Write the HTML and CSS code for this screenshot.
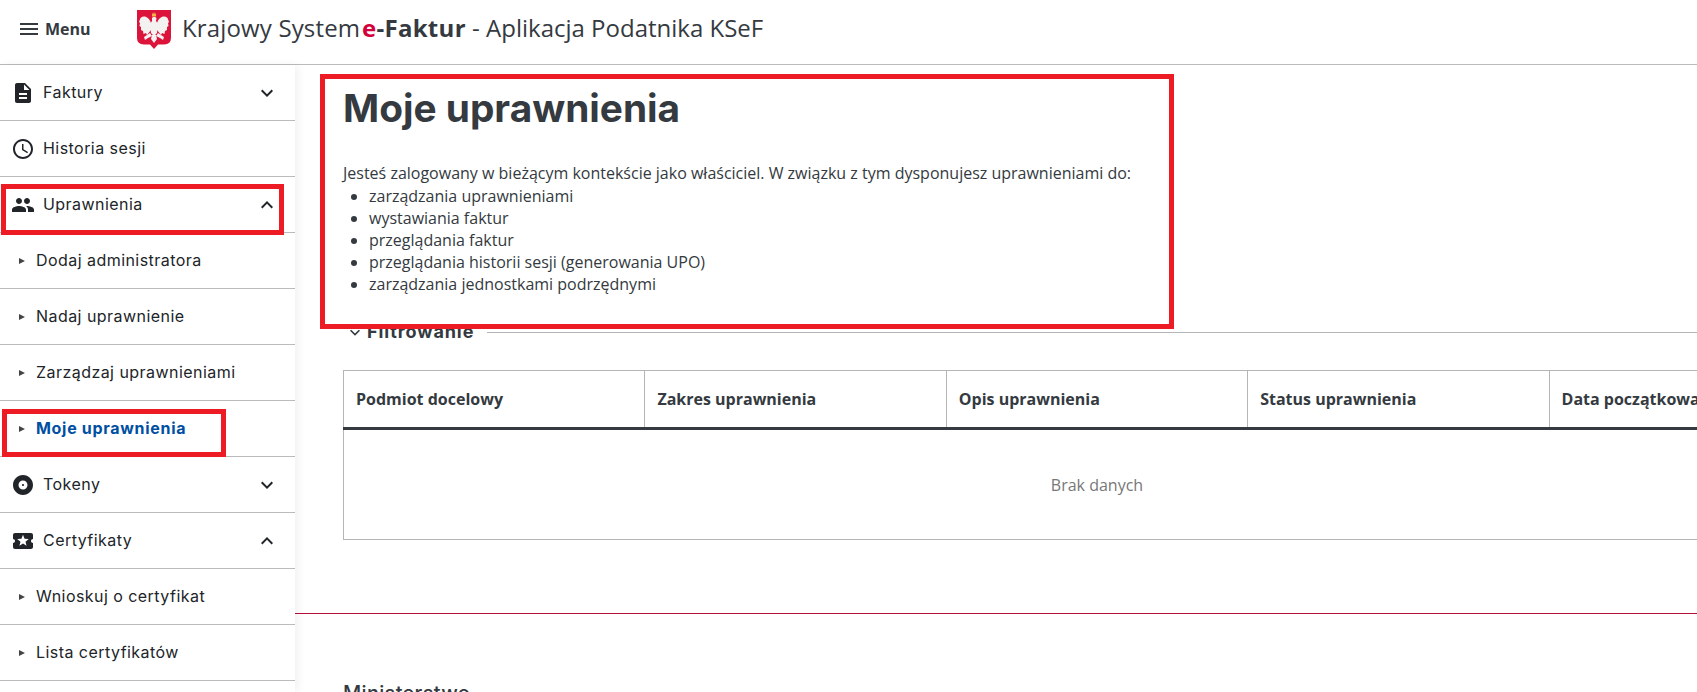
FILE: index.html
```html
<!DOCTYPE html>
<html lang="pl">
    <head>
        <meta charset="UTF-8" />
        <meta name="viewport" content="width=device-width, initial-scale=1.0" />
        <title>Moje uprawnienia</title>
        <link rel="stylesheet" href="styles.css">
    </head>
    <body>
        <header class="top-bar">
            <div class="menu-toggle">
                <svg class="icon" viewBox="0 0 24 24"><path d="M3 18h18v-2H3v2zm0-5h18v-2H3v2zm0-7v2h18V6H3z"/></svg>
                <span>Menu</span>
            </div>
            <svg class="logo" viewBox="0 0 34 39">
                <path fill="#dc143c" d="M0 0H34V28Q34 34 27 34.500H21L17 39L13 34.500H7Q0 34 0 28Z"/>
                <path fill="#f5b54a" d="M15 2.500L16 4.500L17 2L18 4.500L19 2.500V6.500H15Z"/>
                <g fill="#f4f1f1">
                    <path d="M15 8C15.500 6.500 18.500 6.500 19.500 8L19 11L21 14L20 23L17 26L14 23L13 14L15 11Z"/>
                    <path d="M14 13C12 7 7 5 3.500 8L2 12L3 13L2.500 16L4 17L4 20L6 21L6.500 24L9 23L10 25L14 20Z"/>
                    <path d="M20 13C22 7 27 5 30.500 8L32 12L31 13L31.500 16L30 17L30 20L28 21L27.500 24L25 23L24 25L20 20Z"/>
                    <path d="M15 25L14 29L17 33L20 29L19 25Z"/>
                    <path d="M13 23L7 27L8 30L11 28L15 26Z"/>
                    <path d="M21 23L27 27L26 30L23 28L19 26Z"/>
                </g>
            </svg>
            <h2 class="app-title"><span>Krajowy System</span> <b><i>e</i>-Faktur</b> - Aplikacja Podatnika KSeF</h2>
        </header>

        <div class="layout">
            <nav class="sidebar">
                <ul class="nav-list">
                    <li class="nav-item">
                        <svg class="icon" viewBox="0 0 24 24"><path d="M14 2H6c-1.100 0-1.990.9-1.990 2L4 20c0 1.100.89 2 1.990 2H18c1.100 0 2-.9 2-2V8l-6-6zm2 16H8v-2h8v2zm0-4H8v-2h8v2zm-3-5V3.500L18.500 9H13z"/></svg>
                        <span>Faktury</span>
                        <svg class="icon chevron" viewBox="0 0 24 24"><path d="M16.590 8.590L12 13.170 7.410 8.590 6 10l6 6 6-6z"/></svg>
                    </li>
                    <li class="nav-item">
                        <svg class="icon" viewBox="0 0 24 24"><path d="M11.990 2C6.470 2 2 6.480 2 12s4.470 10 9.990 10C17.520 22 22 17.520 22 12S17.520 2 11.990 2zM12 20c-4.420 0-8-3.580-8-8s3.580-8 8-8 8 3.580 8 8-3.580 8-8 8zm.5-13H11v6l5.250 3.150.75-1.230-4.500-2.670z"/></svg>
                        <span>Historia sesji</span>
                    </li>
                    <li class="nav-item">
                        <svg class="icon" viewBox="0 0 24 24"><path d="M16 11c1.660 0 2.990-1.340 2.990-3S17.660 5 16 5c-1.660 0-3 1.340-3 3s1.340 3 3 3zm-8 0c1.660 0 2.990-1.340 2.990-3S9.660 5 8 5C6.340 5 5 6.340 5 8s1.340 3 3 3zm0 2c-2.330 0-7 1.170-7 3.500V19h14v-2.500c0-2.330-4.670-3.500-7-3.500zm8 0c-.29 0-.62.02-.97.05 1.160.84 1.970 1.970 1.970 3.450V19h6v-2.500c0-2.330-4.670-3.500-7-3.500z"/></svg>
                        <span>Uprawnienia</span>
                        <svg class="icon chevron" viewBox="0 0 24 24"><path d="M12 8l-6 6 1.410 1.410L12 10.830l4.590 4.580L18 14z"/></svg>
                        <div class="mark mark-group"></div>
                    </li>
                    <li class="nav-item sub"><span>Dodaj administratora</span></li>
                    <li class="nav-item sub"><span>Nadaj uprawnienie</span></li>
                    <li class="nav-item sub"><span>Zarządzaj uprawnieniami</span></li>
                    <li class="nav-item sub active">
                        <span>Moje uprawnienia</span>
                        <div class="mark mark-active"></div>
                    </li>
                    <li class="nav-item">
                        <svg class="icon" viewBox="0 0 24 24"><path d="M12 2C6.480 2 2 6.480 2 12s4.480 10 10 10 10-4.480 10-10S17.520 2 12 2zm0 14.500c-2.490 0-4.500-2.010-4.500-4.500S9.510 7.500 12 7.500s4.500 2.010 4.500 4.500-2.010 4.500-4.500 4.500zm0-5.500c-.55 0-1 .45-1 1s.45 1 1 1 1-.45 1-1-.45-1-1-1z"/></svg>
                        <span>Tokeny</span>
                        <svg class="icon chevron" viewBox="0 0 24 24"><path d="M16.590 8.590L12 13.170 7.410 8.590 6 10l6 6 6-6z"/></svg>
                    </li>
                    <li class="nav-item">
                        <svg class="icon" viewBox="0 0 24 24"><path d="M20 12c0-1.100.9-2 2-2V6c0-1.100-.9-2-2-2H4c-1.100 0-1.990.9-1.990 2v4c1.100 0 1.990.9 1.990 2s-.89 2-2 2v4c0 1.100.9 2 2 2h16c1.100 0 2-.9 2-2v-4c-1.100 0-2-.9-2-2zm-4.420 4.800L12 14.500l-3.580 2.300 1.080-4.120-3.290-2.690 4.240-.25L12 5.800l1.540 3.950 4.240.25-3.290 2.690 1.090 4.110z"/></svg>
                        <span>Certyfikaty</span>
                        <svg class="icon chevron" viewBox="0 0 24 24"><path d="M12 8l-6 6 1.410 1.410L12 10.830l4.590 4.580L18 14z"/></svg>
                    </li>
                    <li class="nav-item sub"><span>Wnioskuj o certyfikat</span></li>
                    <li class="nav-item sub"><span>Lista certyfikatów</span></li>
                </ul>
            </nav>

            <main class="content">
                <section class="intro">
                    <h1>Moje uprawnienia</h1>
                    <p>Jesteś zalogowany w bieżącym kontekście jako właściciel. W związku z tym dysponujesz uprawnieniami do:</p>
                    <ul>
                        <li>zarządzania uprawnieniami</li>
                        <li>wystawiania faktur</li>
                        <li>przeglądania faktur</li>
                        <li>przeglądania historii sesji (generowania UPO)</li>
                        <li>zarządzania jednostkami podrzędnymi</li>
                    </ul>
                </section>

                <div class="filter-row">
                    <svg class="filter-chevron" viewBox="6 8 12 8"><path d="M16.590 8.590L12 13.170 7.410 8.590 6 10l6 6 6-6z"/></svg>
                    <span>Filtrowanie</span>
                </div>

                <table class="grants">
                    <thead>
                        <tr>
                            <th>Podmiot docelowy</th>
                            <th>Zakres uprawnienia</th>
                            <th>Opis uprawnienia</th>
                            <th>Status uprawnienia</th>
                            <th>Data początkowa</th>
                        </tr>
                    </thead>
                    <tbody>
                        <tr>
                            <td colspan="5">Brak danych</td>
                        </tr>
                    </tbody>
                </table>

                <footer class="page-footer">
                    <h3>Ministerstwo</h3>
                </footer>
            </main>
        </div>
    </body>
</html>
```

FILE: styles.css
```css
html,
body {
    height: 692px;
    overflow: hidden;
}

body {
    margin: 0;
    padding: 0;
    background-color: #fff;
    color: #343a40;
    font-family: "Open Sans", sans-serif;
    font-size: 16px;
}

.icon {
    width: 24px;
    height: 24px;
    flex-shrink: 0;
    fill: currentColor;
}

/* 상단 바 */
.top-bar {
    display: flex;
    align-items: center;
    box-sizing: content-box;
    height: 58px;
    padding-bottom: 6px;
    border-bottom: 1px solid #bbb;
}

.menu-toggle {
    display: flex;
    align-items: center;
    gap: 4px;
    width: 120px;
    padding-left: 17px;
    font-size: 16px;
    font-weight: 700;
}

.logo {
    width: 34px;
    height: 39px;
}

.app-title {
    margin: 0 0 2px 11px;
    font-size: 24px;
    font-weight: 400;
    line-height: 32px;
    white-space: nowrap;
}

.app-title span {
    letter-spacing: 0.15px;
}

.app-title b {
    margin-left: -4.500px;
    font-weight: 700;
    letter-spacing: 0.3px;
}

.app-title i {
    color: #d4003c;
    font-style: normal;
}

.layout {
    display: flex;
    height: 627px;
}

/* 사이드바 */
.sidebar {
    width: 295px;
    flex-shrink: 0;
    box-shadow: 3px 0 8px rgba(0, 0, 0, 0.06);
    position: relative;
    z-index: 2;
    color: #212529;
    font-family: Inter, sans-serif;
    font-size: 16px;
}

.nav-list {
    list-style: none;
    margin: 0;
    padding: 0;
}

.nav-item {
    display: flex;
    align-items: center;
    height: 55px;
    padding-left: 11px;
    border-bottom: 1px solid #bbb;
    position: relative;
    letter-spacing: 0.45px;
}

.nav-item > span {
    margin: 0 0 2px 8px;
}

.chevron {
    margin-left: auto;
    margin-right: 16px;
}

.nav-item.sub {
    padding-left: 19px;
}

.nav-item.sub::before {
    content: "";
    border-left: 6px solid #444;
    border-top: 3.500px solid transparent;
    border-bottom: 3.500px solid transparent;
}

.nav-item.sub > span {
    margin-left: 11px;
}

.nav-item.active {
    color: #004fa3;
    font-weight: 700;
    letter-spacing: 0.7px;
}

/* 빨간 표시 */
.mark {
    position: absolute;
    border: 5px solid #ed1c24;
    box-sizing: border-box;
}

.mark-group {
    left: 1px;
    top: 7px;
    width: 283px;
    height: 51px;
}

.mark-active {
    left: 2px;
    top: 8px;
    width: 224px;
    height: 48px;
}

/* 본문 */
.content {
    flex: 1;
    min-width: 0;
    overflow: hidden;
}

.intro {
    box-sizing: border-box;
    width: 854px;
    height: 255px;
    margin: 9px 0 0 25px;
    padding: 7px 0 0 18px;
    border: 5px solid #ed1c24;
    background-color: #fff;
    position: relative;
    z-index: 1;
}

.intro h1 {
    margin: 0 0 32px;
    font-family: Inter, sans-serif;
    font-size: 38.800px;
    font-weight: 700;
    line-height: 44px;
}

.intro p {
    margin: 0;
    line-height: 22px;
}

.intro ul {
    margin: 1px 0 0;
    padding-left: 26px;
}

.intro li {
    line-height: 22px;
}

.filter-row {
    display: flex;
    align-items: center;
    margin: -8px 0 27px 55px;
    font-family: Inter, sans-serif;
    font-size: 18px;
    font-weight: 700;
    letter-spacing: 0.9px;
    line-height: 22px;
}

.filter-row::after {
    content: "";
    flex: 1;
    margin-left: 13px;
    border-top: 1px solid #b5b5b5;
}

.filter-chevron {
    width: 10px;
    height: 7px;
    margin-right: 7px;
    fill: currentColor;
}

.grants {
    width: 1508px;
    margin-left: 48px;
    border-collapse: collapse;
    table-layout: fixed;
    border: 1px solid #b5b5b5;
}

.grants th {
    height: 56px;
    padding: 0 12px;
    border-left: 1px solid #b5b5b5;
    border-bottom: 3px solid #343a40;
    font-weight: 700;
    text-align: left;
    white-space: nowrap;
}

.grants td {
    height: 107px;
    color: #777;
    text-align: center;
}

.page-footer {
    margin-top: 73px;
    padding: 65px 0 0 48px;
    border-top: 1px solid #b80d38;
}

.page-footer h3 {
    margin: 0;
    font-family: Inter, sans-serif;
    font-size: 20px;
    font-weight: 500;
    letter-spacing: 0.3px;
    line-height: 28px;
}
```
